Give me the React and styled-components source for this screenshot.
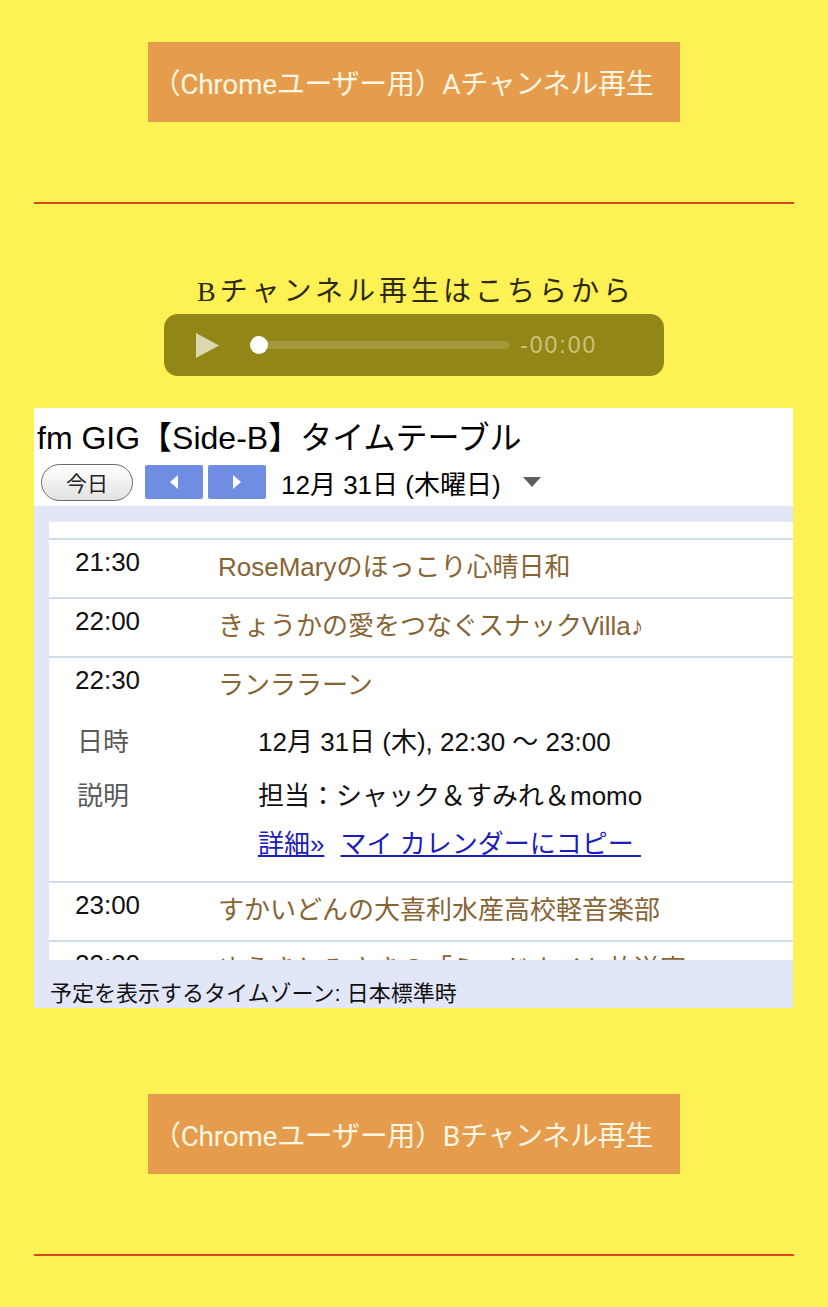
import React from 'react';
import styled, { createGlobalStyle } from 'styled-components';

const GlobalStyle = createGlobalStyle`
html, body { margin:0; padding:0; background:#fef153; }
body { font-family:"Liberation Sans", "Noto Sans CJK JP", sans-serif; }
`;

const Page = styled.div`
width:828px;
min-height:1307px;
box-sizing:border-box;
padding:0 34px 51px;
display:flex;
flex-direction:column;
align-items:center;
`;
const ChromeButton = styled.a`
width:532px;
height:80px;
margin-top:${p => p.$top}px;
box-sizing:border-box;
padding-right:22px;
display:flex;
align-items:center;
justify-content:center;
background:#e59d4d;
color:#fdf6e0;
text-decoration:none;
font-family:"Liberation Sans Narrow", Roboto, "Noto Sans CJK JP", sans-serif;
font-size:28px;
letter-spacing:-0.3px;
`;
const Divider = styled.hr`
width:100%;
height:2px;
margin:80px 0 0;
border:0;
background:#d84a1a;
`;
const Heading = styled.div`
margin-top:70px;
padding-left:4px;
font-family:"Liberation Serif", "Noto Sans CJK JP", serif;
font-size:28px;
line-height:36px;
letter-spacing:4px;
color:#2d2a14;
`;
const Player = styled.div`
width:500px;
height:62px;
margin-top:4px;
box-sizing:border-box;
padding:0 32px;
border-radius:14px;
background:#918616;
display:flex;
align-items:center;
`;
const Track = styled.div`
position:relative;
width:259px;
height:8px;
margin-left:31px;
border-radius:4px;
background:rgba(255,255,255,0.16);
`;
const Thumb = styled.span`
position:absolute;
left:0;
top:-5px;
width:18px;
height:18px;
border-radius:50%;
background:#fff;
`;
const PlayerTime = styled.span`
margin-left:11px;
font-size:23px;
letter-spacing:2px;
color:#cbc47c;
`;

const Calendar = styled.div`
align-self:flex-start;
width:759px;
height:600px;
margin-top:32px;
background:#fff;
display:flex;
flex-direction:column;
color:#111;
`;
const CalTitle = styled.div`
padding:12px 0 0 3px;
font-size:32px;
line-height:36px;
color:#000;
`;
const Toolbar = styled.div`
height:40px;
margin:6px 0 4px;
padding-left:7px;
display:flex;
align-items:center;
`;
const TodayButton = styled.button`
width:92px;
height:37px;
box-sizing:border-box;
border:1.5px solid #6b6b6b;
border-radius:19px;
background:linear-gradient(#ffffff, #e2e2e2);
font-family:inherit;
font-size:21px;
color:#222;
padding:0;
`;
const NavButton = styled.button`
width:58px;
height:34px;
margin-left:${p => p.$gap}px;
border:0;
border-radius:2px;
background:#6f8de3;
display:flex;
align-items:center;
justify-content:center;
padding:0;
`;
const DateLabel = styled.span`
margin-left:15px;
font-size:26px;
color:#000;
`;
const DropArrow = styled.svg`
margin-left:22px;
`;
const CalBody = styled.div`
flex:1;
background:#e2e7f8;
padding:16px 0 0 15px;
display:flex;
flex-direction:column;
`;
const ScrollPanel = styled.div`
height:438px;
flex-shrink:0;
box-sizing:border-box;
padding-top:16px;
overflow:hidden;
background:#fff;
`;
const Event = styled.div`
border-top:2px solid #d1dce6;
padding:0 0 15px 26px;
`;
const EventHead = styled.div`
display:grid;
grid-template-columns:143px 1fr;
font-size:26px;
line-height:30px;
`;
const Time = styled.div`
padding-top:7px;
color:#111;
`;
const EventTitle = styled.div`
padding-top:12px;
color:#876434;
`;
const Details = styled.div`
display:grid;
grid-template-columns:181px 1fr;
row-gap:24px;
margin:27px 0 7px 2px;
font-size:26px;
line-height:30px;
`;
const Label = styled.div`
color:#5a5a5a;
`;
const Value = styled.div`
color:#111;
`;
const Links = styled.div`
margin-top:18px;
display:flex;
gap:16px;
`;
const Link = styled.a`
color:#1d1db8;
text-decoration:underline;
white-space:pre;
`;
const Footer = styled.div`
padding:20px 0 0 1px;
font-size:22px;
line-height:28px;
color:#111;
`;

const events = [
  { time: '21:30', title: 'RoseMaryのほっこり心晴日和' },
  { time: '22:00', title: 'きょうかの愛をつなぐスナックVilla♪' },
  { time: '22:30', title: 'ランララーン', open: true },
  { time: '23:00', title: 'すかいどんの大喜利水産高校軽音楽部' },
  { time: '23:30', title: 'ゆうきとみさきの「ミッドナイト放送室」' },
];

const App = () => {
  return (
    <>
      <GlobalStyle />
      <Page>
        <ChromeButton href="#" $top={42}>（Chromeユーザー用）Aチャンネル再生</ChromeButton>
        <Divider />
        <Heading>Bチャンネル再生はこちらから</Heading>
        <Player>
          <svg width="23" height="25" viewBox="0 0 23 25">
            <polygon points="0,0 23,12.5 0,25" fill="#dcd8ae" />
          </svg>
          <Track><Thumb /></Track>
          <PlayerTime>-00:00</PlayerTime>
        </Player>
        <Calendar>
          <CalTitle>fm GIG【Side-B】タイムテーブル</CalTitle>
          <Toolbar>
            <TodayButton>今日</TodayButton>
            <NavButton $gap={12}>
              <svg width="8" height="14" viewBox="0 0 8 14"><polygon points="8,0 0,7 8,14" fill="#fff" /></svg>
            </NavButton>
            <NavButton $gap={5}>
              <svg width="8" height="14" viewBox="0 0 8 14"><polygon points="0,0 8,7 0,14" fill="#fff" /></svg>
            </NavButton>
            <DateLabel>12月 31日 (木曜日)</DateLabel>
            <DropArrow width="18" height="10" viewBox="0 0 18 10">
              <polygon points="0,0 18,0 9,10" fill="#5e5e5e" />
            </DropArrow>
          </Toolbar>
          <CalBody>
            <ScrollPanel>
              {events.map(ev => (
                <Event key={ev.time}>
                  <EventHead>
                    <Time>{ev.time}</Time>
                    <EventTitle>{ev.title}</EventTitle>
                  </EventHead>
                  {ev.open && (
                    <Details>
                      <Label>日時</Label>
                      <Value>12月 31日 (木), 22:30 〜 23:00</Value>
                      <Label>説明</Label>
                      <Value>
                        担当：シャック＆すみれ＆momo
                        <Links>
                          <Link href="#">詳細»</Link>
                          <Link href="#">マイ カレンダーにコピー </Link>
                        </Links>
                      </Value>
                    </Details>
                  )}
                </Event>
              ))}
            </ScrollPanel>
            <Footer>予定を表示するタイムゾーン: 日本標準時</Footer>
          </CalBody>
        </Calendar>
        <ChromeButton href="#" $top={86}>（Chromeユーザー用）Bチャンネル再生</ChromeButton>
        <Divider />
      </Page>
    </>
  );
};

export default App;
